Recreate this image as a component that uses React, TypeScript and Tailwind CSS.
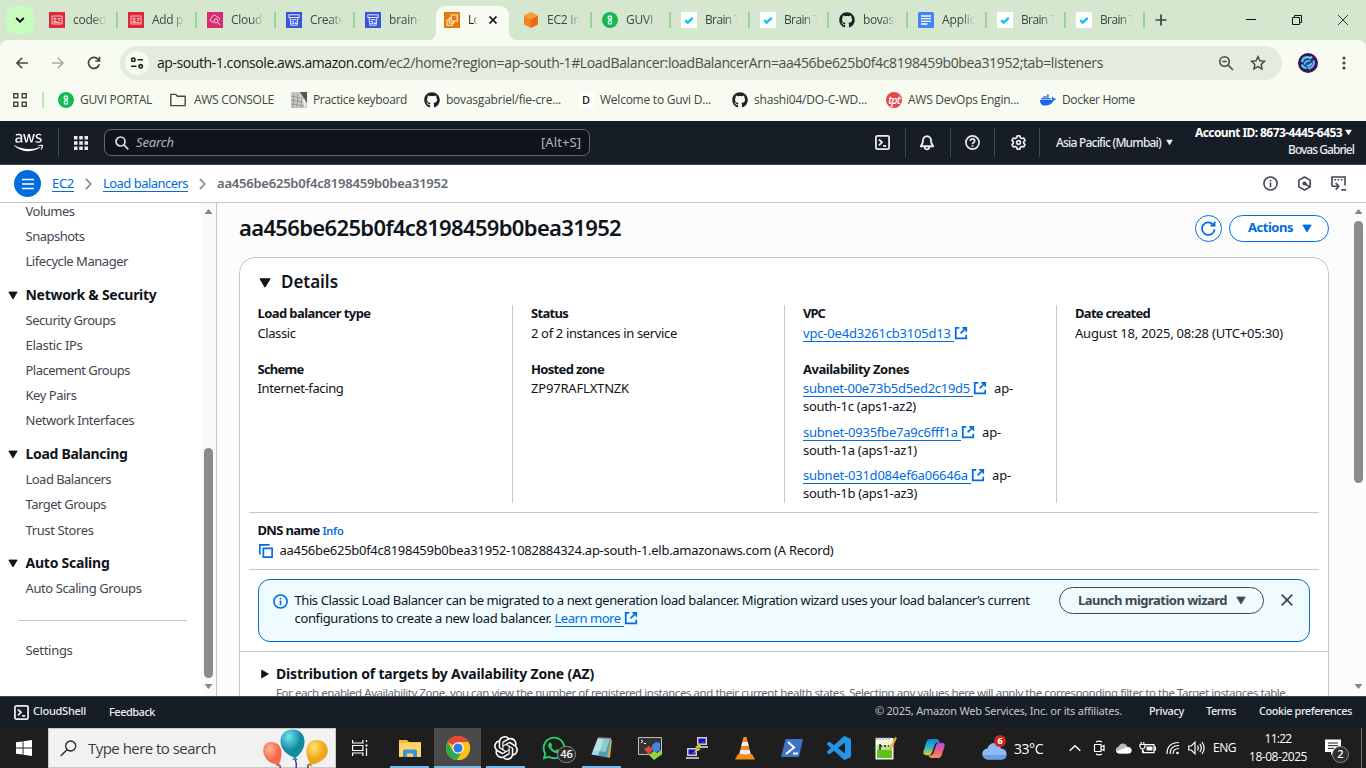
import { useLayoutEffect, useRef, useState } from "react";
import type { ReactNode } from "react";
import { FaAws, FaDocker, FaGithub, FaWhatsapp } from "react-icons/fa";
import { SiOpenai } from "react-icons/si";

/* Text run whose tracking is adjusted so that it fills an exact width. */
function Fit({ w, className = "", children }: { w: number; className?: string; children: string }) {
  const ref = useRef<HTMLSpanElement>(null);
  const [spacing, setSpacing] = useState(0);
  useLayoutEffect(() => {
    const el = ref.current;
    if (!el) return;
    el.style.letterSpacing = "0px";
    const natural = el.getBoundingClientRect().width;
    setSpacing((w - natural) / children.length);
  }, [w, children]);
  return (
    <span className={`inline-block shrink-0 align-top whitespace-pre ${className}`} style={{ width: w }}>
      <span ref={ref} style={{ letterSpacing: spacing }}>
        {children}
      </span>
    </span>
  );
}

const Down = ({ className = "" }: { className?: string }) => (
  <svg viewBox="0 0 12 10" className={`shrink-0 ${className}`} fill="currentColor">
    <path d="M1 .8h10L6 9.2z" stroke="currentColor" strokeWidth="1" strokeLinejoin="round" />
  </svg>
);

const External = ({ className = "" }: { className?: string }) => (
  <svg viewBox="0 0 16 16" className={`inline-block h-[14px] w-[14px] ${className}`} fill="none" stroke="currentColor" strokeWidth="2">
    <path d="M6 2H2v12h12v-4M9.500 2H14v4.500M14 2 7.500 8.500" />
  </svg>
);

/* ---------- Browser icons ---------- */

const RedCard = () => (
  <svg viewBox="0 0 16 16" className="size-4 shrink-0">
    <rect width="16" height="16" fill="#dc2a3a" />
    <path d="M3 4h10v8H3zM4.500 9.500h3M9 6.500h2.500M9 8h2.500M4.500 10.300h7" fill="none" stroke="#ffd9dc" strokeWidth=".9" />
    <circle cx="6" cy="7" r="1.100" fill="none" stroke="#ffd9dc" strokeWidth=".9" />
  </svg>
);
const PinkCloud = () => (
  <svg viewBox="0 0 16 16" className="size-4 shrink-0">
    <rect width="16" height="16" fill="#d92b72" />
    <path d="M6.500 10H5a2 2 0 0 1-.4-3.900C4.800 4 6.200 3.200 7.600 3.300c1.300.1 2 .8 2.400 1.900 1.600 0 2.700 1 2.700 2.400" fill="none" stroke="#ffe1ee" strokeWidth=".9" />
    <circle cx="9" cy="9" r="2" fill="none" stroke="#ffe1ee" strokeWidth=".9" />
    <path d="m10.500 10.500 2.500 2.300" stroke="#ffe1ee" />
  </svg>
);
const BlueBucket = () => (
  <svg viewBox="0 0 16 16" className="size-4 shrink-0">
    <rect width="16" height="16" fill="#3b55d9" />
    <path d="M2.800 2.800h10.400v2.700H2.800zM4 5.500l.8 7.700h6.400l.8-7.700M5.500 7.700h5M5.500 9.500h2v2h-2M8.500 11.500l2.300-2M9 11.500h2" fill="none" stroke="#dfe6ff" strokeWidth="1" />
  </svg>
);
const Ec2 = () => (
  <svg viewBox="0 0 16 16" className="size-4 shrink-0">
    <rect width="16" height="16" fill="#e57a0c" />
    <path d="M7.200 3h6v6h-6zM9.800 9v2H5.200V6h2M5.200 8H3v5.200h5.200V11" fill="none" stroke="#fff0d8" strokeWidth="1.100" strokeLinejoin="round" />
  </svg>
);
const Cube = () => (
  <svg viewBox="0 0 16 16" className="size-4 shrink-0">
    <path d="m8 0 7 3.400-7 3.800L1 3.400z" fill="#fb9a2d" />
    <path d="M1 3.400 8 7.200V16l-7-3.600z" fill="#f58220" />
    <path d="M15 3.400 8 7.200V16l7-3.600z" fill="#ec6816" />
  </svg>
);
const Guvi = () => (
  <svg viewBox="0 0 16 16" className="size-4 shrink-0">
    <circle cx="8" cy="8" r="8" fill="#16b955" />
    <g fill="none" stroke="#e9fff1" strokeWidth="1.300">
      <circle cx="7.800" cy="5.700" r="1.700" />
      <path d="M9.500 4.500v2.300c0 2-3.200 1.300-3.200 3.600a1.700 1.700 0 0 0 3.400 0c0-1-.8-1.600-1.500-1.900" />
    </g>
  </svg>
);
const Check = () => (
  <svg viewBox="0 0 16 16" className="size-4 shrink-0">
    <rect width="16" height="16" fill="#fff" />
    <path d="m4.200 8.200 2.500 2.400 5-4.800" fill="none" stroke="#10c0f5" strokeWidth="2.300" />
  </svg>
);
const Doc = () => (
  <svg viewBox="0 0 16 16" className="size-4 shrink-0">
    <rect width="16" height="16" rx="1.500" fill="#4285f4" />
    <path d="M3 4h10M3 6.700h10M3 9.400h10M3 12h6.500" stroke="#fff" strokeWidth="1.300" />
  </svg>
);
const Github = () => <FaGithub className="size-4 shrink-0 text-[#1f2328]" />;

function Tab({ icon, text, w, sep = true }: { icon: ReactNode; text: string; w: number; sep?: boolean }) {
  return (
    <div className="flex h-[30px] w-[79px] shrink-0 items-center pl-2">
      {icon}
      <div className="ml-2 w-[33px] overflow-hidden text-[#40483d] [mask-image:linear-gradient(to_right,black_60%,transparent)]">
        <Fit w={w}>{text}</Fit>
      </div>
      {sep && <div className="ml-[10px] h-4 w-[2px] bg-[#9ad69a]" />}
    </div>
  );
}

function TabStrip() {
  return (
    <div className="flex h-10 items-center bg-[#d5e7cf] text-[12px]">
      <div className="ml-[6px] flex size-7 items-center justify-center rounded-[9px] bg-[#c6fdbf]">
        <svg viewBox="0 0 10 8" className="h-2 w-[10px]" fill="none" stroke="#111" strokeWidth="1.900">
          <path d="m1.200 2 3.800 3.600L8.800 2" />
        </svg>
      </div>
      <div className="ml-[7px] flex items-center">
        <Tab icon={<RedCard />} text="coded" w={33} />
        <Tab icon={<RedCard />} text="Add po" w={38} />
        <Tab icon={<PinkCloud />} text="CloudW" w={42} />
        <Tab icon={<BlueBucket />} text="Create" w={35} />
        <Tab icon={<BlueBucket />} text="brain-t" w={36} sep={false} />
      </div>
      <div className="relative mt-[6px] flex h-[34px] w-[73px] items-center rounded-t-[9px] bg-[#f8fbf2] pb-[6px] pl-2">
        <div className="absolute bottom-0 -left-2 size-2 bg-[radial-gradient(circle_at_top_left,transparent_8px,#f8fbf2_8px)]" />
        <div className="absolute -right-2 bottom-0 size-2 bg-[radial-gradient(circle_at_top_right,transparent_8px,#f8fbf2_8px)]" />
        <Ec2 />
        <div className="ml-2 w-[10px] overflow-hidden text-[#1b1f1a] [mask-image:linear-gradient(to_right,black_50%,transparent)]">
          <Fit w={24}>Load</Fit>
        </div>
        <svg viewBox="0 0 8 8" className="ml-[11px] size-2" stroke="#1b1f1a" strokeWidth="1.700">
          <path d="m.5.5 7 7m0-7-7 7" />
        </svg>
      </div>
      <div className="ml-[6px] flex items-center">
        <Tab icon={<Cube />} text="EC2 Ins" w={39} />
        <Tab icon={<Guvi />} text="GUVI" w={27} />
        <Tab icon={<Check />} text="Brain Ta" w={41} />
        <Tab icon={<Check />} text="Brain Ta" w={41} />
        <Tab icon={<Github />} text="bovasg" w={37} />
        <Tab icon={<Doc />} text="Applica" w={40} />
        <Tab icon={<Check />} text="Brain Ta" w={41} />
        <Tab icon={<Check />} text="Brain Ta" w={41} />
      </div>
      <svg viewBox="0 0 12 12" className="ml-[8px] size-3" stroke="#3c443a" strokeWidth="1.700">
        <path d="M6 .5v11M.5 6h11" />
      </svg>
      <div className="mr-[18px] ml-auto flex items-center gap-[36px]">
        <svg viewBox="0 0 10 10" className="size-[10px]" stroke="#111">
          <path d="M0 4.500h10" />
        </svg>
        <svg viewBox="0 0 10 10" className="size-[10px]" fill="none" stroke="#111">
          <path d="M.5 2.500h7v7h-7zM2.500 2.500v-2h7v7h-2" />
        </svg>
        <svg viewBox="0 0 10 10" className="size-[10px]" stroke="#222" strokeWidth=".9">
          <path d="m0 0 10 10M10 0 0 10" />
        </svg>
      </div>
    </div>
  );
}

function Toolbar() {
  return (
    <div className="h-[40px] bg-[#d5e7cf]">
      <div className="flex h-[46px] items-center rounded-t-[8px] bg-[#f8fbf2] pl-4">
        <svg viewBox="0 0 12 12" className="size-3" fill="none" stroke="#43493f" strokeWidth="1.600">
          <path d="M12 6H1.200M6.200.8 1 6l5.200 5.200" />
        </svg>
        <svg viewBox="0 0 12 12" className="ml-6 size-3" fill="none" stroke="#a5aaa0" strokeWidth="1.500">
          <path d="M0 6h10.800M5.800.8 11 6l-5.200 5.200" />
        </svg>
        <svg viewBox="0 0 14 14" className="ml-[23px] size-[14px]" fill="none" stroke="#43493f" strokeWidth="1.700">
          <path d="M12.300 8.200A5.500 5.500 0 1 1 11 3.200l1.200 1.300M12.500.8v4.200H8.300" />
        </svg>
        <div className="ml-[19px] flex h-[34px] w-[1162px] items-center rounded-full bg-[#e4ece0] pl-[5px] text-[14px] text-[#4a5147]">
          <div className="flex size-6 items-center justify-center rounded-full bg-[#f8fbf2]">
            <svg viewBox="0 0 14 12" className="h-3 w-[14px]" fill="none" stroke="#222" strokeWidth="1.600">
              <circle cx="3.300" cy="2.700" r="1.700" />
              <circle cx="10.700" cy="9.300" r="1.700" />
              <path d="M7.500 2.700H13M1 9.300h5.500" />
            </svg>
          </div>
          <Fit w={227} className="ml-2 pb-[2px] text-[#161a14]">ap-south-1.console.aws.amazon.com</Fit>
          <Fit w={719} className="pb-[2px]">/ec2/home?region=ap-south-1#LoadBalancer:loadBalancerArn=aa456be625b0f4c8198459b0bea31952;tab=listeners</Fit>
          <svg viewBox="0 0 16 16" className="ml-[115px] size-4" fill="none" stroke="#454b42" strokeWidth="1.600">
            <circle cx="6.500" cy="6.500" r="4.700" />
            <path d="m10 10 5 5M4.300 6.500h4.400" />
          </svg>
          <svg viewBox="0 0 16 16" className="ml-4 size-4" fill="none" stroke="#454b42" strokeWidth="1.400">
            <path d="m8 1.600 1.900 4.200 4.600.5-3.400 3.100 1 4.500L8 11.600l-4.100 2.300 1-4.500L1.500 6.300l4.600-.5z" />
          </svg>
        </div>
        <svg viewBox="0 0 20 20" className="ml-4 size-5">
          <circle cx="10" cy="10" r="10" fill="#3c1459" />
          <circle cx="10" cy="10" r="6" fill="#23418f" />
          <path d="M4 9C4.500 4.500 9 3 12.500 5l1.500-1.500" fill="none" stroke="#48dcec" strokeWidth="2.200" />
          <path d="M15.500 7.500c1.500 4-1 7-4.500 7.500l1 1.500" fill="none" stroke="#5db4f2" strokeWidth="2.200" />
          <path d="M4 11.500c.5 2.500 2 3.500 4.500 3.500" fill="none" stroke="#48dcec" strokeWidth="2" />
          <path d="M6.500 11.500c.5-3 2.500-4 5.500-3.500M13.500 10c-.5 2-2 3-5 2.500" fill="none" stroke="#7fd2f7" strokeWidth="1.400" />
        </svg>
        <svg viewBox="0 0 4 14" className="ml-6 h-[14px] w-1" fill="#43493f">
          <circle cx="2" cy="2" r="1.600" />
          <circle cx="2" cy="7" r="1.600" />
          <circle cx="2" cy="12" r="1.600" />
        </svg>
      </div>
    </div>
  );
}

function Mark({ icon, text, w, gap, inner = "ml-[6px]" }: { icon: ReactNode; text: string; w: number; gap: string; inner?: string }) {
  return (
    <div className={`flex items-center ${gap}`}>
      {icon}
      <Fit w={w} className={inner}>{text}</Fit>
    </div>
  );
}

function Bookmarks() {
  return (
    <div className="flex h-[41px] items-center bg-[#f8fbf2] pb-px pl-[13px] text-[12px] text-[#40463d]">
      <svg viewBox="0 0 14 14" className="size-[14px]" fill="none" stroke="#43493f" strokeWidth="1.500">
        <path d="M.8.8h4v4h-4zM9.200.8h4v4h-4zM.8 9.200h4v4h-4zM9.200 9.200h4v4h-4z" />
      </svg>
      <div className="ml-[15px] h-4 w-[2px] bg-[#b4edac]" />
      <Mark gap="ml-[14px]" icon={<Guvi />} text="GUVI PORTAL" w={72} />
      <Mark
        gap="ml-[18px]"
        inner="ml-2"
        icon={
          <svg viewBox="0 0 16 14" className="h-[14px] w-4" fill="none" stroke="#43493f" strokeWidth="1.400" strokeLinejoin="round">
            <path d="M.8 12.600V1.400h5l1.600 1.800h7.800v9.400z" />
          </svg>
        }
        text="AWS CONSOLE"
        w={80}
      />
      <Mark
        gap="ml-[17px]"
        icon={
          <svg viewBox="0 0 16 16" className="size-4">
            <rect width="16" height="16" fill="#c9c9c9" />
            <path d="M9 0h7v11z" fill="#555" />
            <path d="M0 4l9 2M0 8l12 2M0 12l14 2M3 1l-1 15M7 1 6 16M11 5l-1 11" stroke="#8a8a8a" strokeWidth=".7" />
            <path d="M12.500 7l2 8" stroke="#eee" strokeWidth="2" />
          </svg>
        }
        text="Practice keyboard"
        w={94}
      />
      <Mark gap="ml-[17px]" icon={<Github />} text="bovasgabriel/fie-cre..." w={115} />
      <Mark
        gap="ml-[17px]"
        icon={<span className="flex size-4 items-center justify-center rounded-[2px] bg-white text-[11px] font-semibold text-[#222]">D</span>}
        text="Welcome to Guvi D..."
        w={111}
      />
      <Mark gap="ml-[21px]" icon={<Github />} text="shashi04/DO-C-WD..." w={113} />
      <Mark
        gap="ml-[19px]"
        icon={
          <span className="flex size-4 items-center justify-center rounded-full bg-[#ea4648] pb-[2px] text-[11px] leading-none font-semibold tracking-[-1px] text-white italic">
            tpt
          </span>
        }
        text="AWS DevOps Engin..."
        w={111}
      />
      <Mark gap="ml-[21px]" icon={<FaDocker className="size-4 text-[#1d63ed]" />} text="Docker Home" w={73} />
    </div>
  );
}

/* ---------- AWS console ---------- */

const ShellIcon = () => (
  <svg viewBox="0 0 16 16" className="size-[15px] shrink-0" fill="none" stroke="currentColor" strokeWidth="1.900">
    <rect x="1" y="1" width="14" height="14" rx="1.500" />
    <path d="m4.200 4.800 3.300 3-3.300 3.200M8.500 11.500h3.500" />
  </svg>
);
const Rule = ({ className = "" }: { className?: string }) => <div className={`h-[29px] w-px bg-[#424650] ${className}`} />;

function AwsHeader() {
  return (
    <div className="flex h-[44px] items-center border-b border-[#424650] bg-[#161d26] pl-[14px] text-[12px] text-[#ebebf0]">
      <FaAws className="h-[29px] w-[29px] text-white" />
      <Rule className="ml-[15px]" />
      <svg viewBox="0 0 14 14" className="ml-[15px] size-[14px]" fill="currentColor">
        <path d="M0 0h3.500v3.500H0zM5.250 0h3.500v3.500h-3.500zM10.500 0H14v3.500h-3.500zM0 5.250h3.500v3.500H0zM5.250 5.250h3.500v3.500h-3.500zM10.500 5.250H14v3.500h-3.500zM0 10.500h3.500V14H0zM5.250 10.500h3.500V14h-3.500zM10.500 10.500H14V14h-3.500z" />
      </svg>
      <div className="ml-4 flex h-[27px] w-[486px] items-center rounded-[7px] border border-[#656871] bg-[#0f141a] pl-[10px] text-[13px] text-[#b4b4bb]">
        <svg viewBox="0 0 14 14" className="size-[14px]" fill="none" stroke="#dedee3" strokeWidth="1.700">
          <circle cx="5.500" cy="5.500" r="4.500" />
          <path d="m9 9 4.300 4.300" />
        </svg>
        <Fit w={38} className="ml-[7px] italic">Search</Fit>
        <Fit w={40} className="mr-[8px] ml-auto">[Alt+S]</Fit>
      </div>
      <div className="ml-[285px] flex items-center">
        <ShellIcon />
        <Rule className="ml-[15px]" />
        <svg viewBox="0 0 16 16" className="ml-[13px] size-4" fill="none" stroke="currentColor" strokeWidth="1.900">
          <path d="M8 1.200c2.700 0 4 2 4 4.300 0 3 .8 4.200 2.200 5.700H1.800C3.200 9.700 4 8.500 4 5.500c0-2.300 1.300-4.300 4-4.300z" strokeLinejoin="round" />
          <path d="M5.700 12c.3 3.200 4.300 3.200 4.600 0" />
        </svg>
        <Rule className="ml-[15px]" />
        <svg viewBox="0 0 16 16" className="ml-[14px] size-[15px]" fill="none" stroke="currentColor" strokeWidth="1.800">
          <circle cx="8" cy="8" r="7" />
          <path d="M5.700 6.500C5.700 3.400 10.300 3.600 10.300 6.300 10.300 8 8 8 8 9.800M8 10.800v1.700" />
        </svg>
        <Rule className="ml-[14px]" />
        <svg viewBox="0 0 16 16" className="ml-[16px] size-[15px]" fill="none" stroke="currentColor" strokeWidth="1.800" strokeLinejoin="round">
          <path d="m6.500 1-.5 2-1.500.8-2-.6L1 5.800l1.500 1.500v1.400L1 10.200l1.500 2.600 2-.6 1.500.8.5 2h3l.5-2 1.500-.8 2 .6 1.500-2.600-1.500-1.500V7.300L15 5.800l-1.500-2.600-2 .6L10 3l-.5-2z" />
          <circle cx="8" cy="8" r="2" />
        </svg>
        <Rule className="ml-[13px]" />
      </div>
      <Fit w={105} className="ml-4 font-medium">Asia Pacific (Mumbai)</Fit>
      <Down className="ml-[5px] h-[7px] w-[7px]" />
      <div className="ml-[22px] flex flex-col items-end pb-[3px] leading-[17px]">
        <div className="mr-[2px] flex items-center gap-[3px] font-bold text-white">
          <Fit w={147}>Account ID: 8673-4445-6453</Fit>
          <Down className="h-[7px] w-[7px]" />
        </div>
        <Fit w={66} className="font-medium">Bovas Gabriel</Fit>
      </div>
    </div>
  );
}

const Chevron = ({ className = "" }: { className?: string }) => (
  <svg viewBox="0 0 7 12" className={`h-3 w-[7px] ${className}`} fill="none" stroke="#8c8c94" strokeWidth="1.700">
    <path d="m.8.8 5 5.200-5 5.200" />
  </svg>
);

function Breadcrumbs() {
  return (
    <div className="flex h-[38px] items-center border-b border-[#c6c6cd] bg-white pl-[14px] text-[13px]">
      <div className="flex size-[27px] items-center justify-center rounded-full bg-[#006ce0]">
        <svg viewBox="0 0 12 12" className="size-3" stroke="#fff" strokeWidth="1.700">
          <path d="M0 1.500h12M0 6h12M0 10.500h12" />
        </svg>
      </div>
      <Fit w={22} className="ml-[11px] border-b border-[#006ce0] leading-[15px] text-[#006ce0]">EC2</Fit>
      <Chevron className="ml-[11px]" />
      <Fit w={85} className="ml-[11px] border-b border-[#006ce0] leading-[15px] text-[#006ce0]">Load balancers</Fit>
      <Chevron className="ml-[11px]" />
      <Fit w={231} className="ml-[11px] font-semibold text-[#656871]">aa456be625b0f4c8198459b0bea31952</Fit>
      <div className="mr-[20px] ml-auto flex items-center gap-[19px] text-[#424650]">
        <svg viewBox="0 0 16 16" className="size-[15px]" fill="none" stroke="currentColor" strokeWidth="1.700">
          <circle cx="8" cy="8" r="7" />
          <path d="M8 7v5M8 4v1.800" />
        </svg>
        <svg viewBox="0 0 16 16" className="size-[15px]" fill="none" stroke="currentColor" strokeWidth="1.700" strokeLinejoin="round">
          <path d="m8 1 6 3.400v7.200L8 15l-6-3.400V4.400z" />
          <circle cx="8" cy="8" r="2.200" fill="currentColor" stroke="none" />
          <path d="m8.500 8.500 5 2.800" />
        </svg>
        <svg viewBox="0 0 16 16" className="size-[15px]" fill="none" stroke="currentColor" strokeWidth="1.700">
          <path d="M1 11V1h14v9M3.500 4h1.800M7 4h1.800M10.500 4h1.800M1 11h6M5 7.500 8.300 11 5 14.500M11 14.800h5" />
        </svg>
      </div>
    </div>
  );
}

function Scrollbar({ track, thumb }: { track: string; thumb: string }) {
  return (
    <div className={`flex w-[15px] shrink-0 flex-col items-center pt-[6px] ${track}`}>
      <svg viewBox="0 0 8 5" className="h-[5px] w-[9px] shrink-0" fill="#858585">
        <path d="M4 0l4 5H0z" />
      </svg>
      <div className={`w-[9px] shrink-0 rounded-full bg-[#8b8b8b] ${thumb}`} />
      <svg viewBox="0 0 8 5" className="mt-auto mb-[7px] h-[5px] w-[9px] shrink-0" fill="#858585">
        <path d="M4 5l4-5H0z" />
      </svg>
    </div>
  );
}

const NavItem = ({ w, children }: { w: number; children: string }) => (
  <div className="flex h-[25px] items-center pl-[25.500px]">
    <Fit w={w}>{children}</Fit>
  </div>
);
const NavHead = ({ w, gap = "mt-[9px]", children }: { w: number; gap?: string; children: string }) => (
  <div className={`flex h-[25px] items-center pb-px pl-[8px] text-[14px] font-bold text-[#0f141a] ${gap}`}>
    <Down className="h-[9px] w-[10px]" />
    <Fit w={w} className="ml-[7.500px] pb-px">{children}</Fit>
  </div>
);

function SideNav() {
  return (
    <div className="flex w-[217px] shrink-0 overflow-hidden border-r border-[#c6c6cd] bg-white text-[13px] text-[#424650]">
      <div className="-mt-1 w-[201px]">
        <NavItem w={49}>Volumes</NavItem>
        <NavItem w={59}>Snapshots</NavItem>
        <NavItem w={102.5}>Lifecycle Manager</NavItem>
        <NavHead w={131}>Network &amp; Security</NavHead>
        <NavItem w={90}>Security Groups</NavItem>
        <NavItem w={57}>Elastic IPs</NavItem>
        <NavItem w={104.5}>Placement Groups</NavItem>
        <NavItem w={51}>Key Pairs</NavItem>
        <NavItem w={108.5}>Network Interfaces</NavItem>
        <NavHead w={102}>Load Balancing</NavHead>
        <NavItem w={85.5}>Load Balancers</NavItem>
        <NavItem w={80.5}>Target Groups</NavItem>
        <div className="pt-px">
          <NavItem w={68}>Trust Stores</NavItem>
        </div>
        <NavHead w={84} gap="mt-[8px]">Auto Scaling</NavHead>
        <NavItem w={116}>Auto Scaling Groups</NavItem>
        <div className="mt-[19px] mb-[17px] ml-[18px] h-px w-[169px] bg-[#c6c6cd]" />
        <NavItem w={47}>Settings</NavItem>
      </div>
      <Scrollbar track="bg-[#fafafa]" thumb="mt-[234px] h-[230px]" />
    </div>
  );
}

/* Label above a value; the cell height fixes where the next label starts. */
function Field({ label, lw, children, tight = "h-[20px]" }: { label: string; lw: number; children: ReactNode; tight?: string }) {
  return (
    <div>
      <div className={`leading-[17px] ${tight}`}>
        <Fit w={lw} className="font-bold">{label}</Fit>
      </div>
      <div className="h-[18px] leading-[17px]">{children}</div>
    </div>
  );
}

const LinkOut = ({ w, children }: { w: number; children: string }) => (
  <span className="flex items-center text-[#006ce0]">
    <Fit w={w} className="-mb-[1px] h-[17px] border-b border-[#006ce0] leading-[17px]">{children}</Fit>
    <External />
  </span>
);

function Subnet({ id, w, zone, zw }: { id: string; w: number; zone: string; zw: number }) {
  return (
    <div className="leading-[18px]">
      <div className="flex h-[18px] items-center">
        <LinkOut w={w}>{id}</LinkOut>
        <Fit w={19} className="ml-[7px]">ap-</Fit>
      </div>
      <div className="h-[18px]">
        <Fit w={zw}>{zone}</Fit>
      </div>
    </div>
  );
}

function Details() {
  return (
    <div className="mr-[9px] ml-[9px]">
      <div className="flex h-[198px]">
        <div className="flex w-[264px] flex-col gap-[18px] border-r border-[#c6c6cd] pl-[8.500px]">
          <Field label="Load balancer type" lw={113}><Fit w={38}>Classic</Fit></Field>
          <Field label="Scheme" lw={46} tight="h-[19px]"><Fit w={86}>Internet-facing</Fit></Field>
        </div>
        <div className="flex w-[272px] flex-col gap-[18px] border-r border-[#c6c6cd] pl-[18px]">
          <Field label="Status" lw={37}><Fit w={146}>2 of 2 instances in service</Fit></Field>
          <Field label="Hosted zone" lw={73} tight="h-[19px]"><Fit w={98}>ZP97RAFLXTNZK</Fit></Field>
        </div>
        <div className="flex w-[272px] flex-col gap-[18px] border-r border-[#c6c6cd] pl-[18px]">
          <Field label="VPC" lw={22}><LinkOut w={151}>vpc-0e4d3261cb3105d13 </LinkOut></Field>
          <Field label="Availability Zones" lw={106} tight="h-[18px]">
            <div className="flex flex-col gap-[7.500px]">
              <Subnet id="subnet-00e73b5d5ed2c19d5 " w={170} zone="south-1c (aps1-az2)" zw={113} />
              <Subnet id="subnet-0935fbe7a9c6fff1a " w={158} zone="south-1a (aps1-az1)" zw={114} />
              <Subnet id="subnet-031d084ef6a06646a " w={168} zone="south-1b (aps1-az3)" zw={114} />
            </div>
          </Field>
        </div>
        <div className="pl-[18px]">
          <Field label="Date created" lw={75}><Fit w={208}>August 18, 2025, 08:28 (UTC+05:30)</Fit></Field>
        </div>
      </div>
      <div className="mt-[9px] h-[57px] border-t border-[#c6c6cd] pt-[8px] pl-[8.500px]">
        <div className="flex h-[20px] items-center">
          <Fit w={62} className="font-bold">DNS name</Fit>
          <Fit w={21} className="ml-[3px] text-[11px] font-semibold text-[#006ce0]">Info</Fit>
        </div>
        <div className="flex h-[19px] items-center">
          <svg viewBox="0 0 16 16" className="ml-[1px] size-[14px]" fill="none" stroke="#006ce0" strokeWidth="1.900">
            <path d="M5 5h10v10H5zM1 12V1h11" />
          </svg>
          <Fit w={554} className="ml-[7px]">aa456be625b0f4c8198459b0bea31952-1082884324.ap-south-1.elb.amazonaws.com (A Record)</Fit>
        </div>
      </div>
      <div className="h-px bg-[#c6c6cd]" />
      <div className="mx-[9px] mt-[9px] flex h-[63px] rounded-[12px] border border-[#006ce0] bg-[#f0fbff] leading-[18px]">
        <svg viewBox="0 0 16 16" className="mt-[14px] ml-[14px] size-[15px] shrink-0" fill="none" stroke="#006ce0" strokeWidth="1.700">
          <circle cx="8" cy="8" r="7" />
          <path d="M8 7v5M8 4v1.800" />
        </svg>
        <div className="mt-[11px] ml-[6.500px] w-[764.500px]">
          <div className="h-[18px]">
            <Fit w={735}>This Classic Load Balancer can be migrated to a next generation load balancer. Migration wizard uses your load balancer’s current</Fit>
          </div>
          <div className="flex h-[18px] items-center gap-[3px]">
            <Fit w={257}>configurations to create a new load balancer.</Fit>
            <LinkOut w={69}>Learn more </LinkOut>
          </div>
        </div>
        <div className="mt-[7px] flex h-[27px] w-[205px] shrink-0 items-center rounded-full border border-[#424650] pl-[18px] font-bold text-[#424650]">
          <Fit w={149} className="pb-[2px]">Launch migration wizard</Fit>
          <Down className="ml-[9px] h-[9px] w-[10px]" />
        </div>
        <svg viewBox="0 0 12 12" className="mt-[14px] ml-[17px] size-3" stroke="#424650" strokeWidth="1.700">
          <path d="m.7.700 10.600 10.600M11.300.7.700 11.300" />
        </svg>
      </div>
    </div>
  );
}

function Main() {
  return (
    <div className="flex min-w-0 flex-1 overflow-hidden bg-[#fcfcfd] text-[13px] text-[#0f141a]">
      <div className="w-[1134px] pt-[12px] pl-[22px]">
        <div className="flex h-[27px] w-[1090px] items-center">
          <Fit w={382} className="pb-[2px] text-[22px] leading-[27px] font-semibold">aa456be625b0f4c8198459b0bea31952</Fit>
          <div className="ml-auto flex size-[27px] items-center justify-center rounded-full border-[1.500px] border-[#006ce0] bg-white">
            <svg viewBox="0 0 16 16" className="size-[15px]" fill="none" stroke="#006ce0" strokeWidth="1.900">
              <path d="M14.500 9A6.700 6.700 0 1 1 12.500 3.300L14 4.700M14.500.5V5H10" />
            </svg>
          </div>
          <div className="ml-[7px] flex h-[27px] w-[100px] items-center rounded-full border-[1.500px] border-[#006ce0] bg-white pb-px pl-[18px] font-bold text-[#006ce0]">
            <Fit w={45}>Actions</Fit>
            <Down className="ml-[9px] h-[9px] w-[10px]" />
          </div>
        </div>
        <div className="mt-[15px] h-[460px] w-[1090px] rounded-t-[16px] border border-[#c6c6cd] bg-white">
          <div className="flex h-[47px] items-center pl-[19px]">
            <Down className="mt-[3px] h-[10px] w-[12px]" />
            <Fit w={57} className="ml-[10px] text-[17px] font-semibold">Details</Fit>
          </div>
          <Details />
          <div className="mt-[9px] border-t border-[#c6c6cd] pt-[10px] pl-[20px]">
            <div className="flex h-[23px] items-center">
              <Down className="h-[8px] w-[10px] -rotate-90" />
              <Fit w={318} className="ml-[6px] text-[14px] font-bold">Distribution of targets by Availability Zone (AZ)</Fit>
            </div>
            <Fit w={1012} className="ml-[16px] pt-px text-[11.500px] leading-[14px] text-[#656871]">For each enabled Availability Zone, you can view the number of registered instances and their current health states. Selecting any values here will apply the corresponding filter to the Target instances table.</Fit>
          </div>
        </div>
      </div>
      <Scrollbar track="bg-[#fcfcfc]" thumb="mt-[7px] h-[262px]" />
    </div>
  );
}

function Footer() {
  return (
    <div className="flex h-[32px] items-center border-t border-[#424650] bg-[#161d26] pl-[14px] text-[11px] font-medium text-[#ebebf0]">
      <ShellIcon />
      <Fit w={53} className="ml-[4px] pb-[2px]">CloudShell</Fit>
      <Fit w={46} className="ml-[23px]">Feedback</Fit>
      <div className="mr-[14px] ml-auto flex pb-[2px]">
        <Fit w={247} className="font-normal text-[#c6c6cd]">© 2025, Amazon Web Services, Inc. or its affiliates.</Fit>
        <Fit w={35} className="ml-[27px]">Privacy</Fit>
        <Fit w={30} className="ml-[22px]">Terms</Fit>
        <Fit w={93} className="ml-[23px]">Cookie preferences</Fit>
      </div>
    </div>
  );
}

/* ---------- Taskbar ---------- */

const Balloons = () => (
  <svg viewBox="0 0 70 39" className="h-[39px] w-[70px]">
    <defs>
      <radialGradient id="br" cx=".35" cy=".3"><stop offset="0" stopColor="#ffb39a" /><stop offset="1" stopColor="#f4694c" /></radialGradient>
      <radialGradient id="bt" cx=".35" cy=".25"><stop offset="0" stopColor="#6fe6ee" /><stop offset="1" stopColor="#13899f" /></radialGradient>
      <radialGradient id="by" cx=".35" cy=".3"><stop offset="0" stopColor="#ffe469" /><stop offset="1" stopColor="#f0a41c" /></radialGradient>
    </defs>
    <path d="M18 35q3 2 2 4M35 30q2 5 1 9M50 35q-3 1-2 4" fill="none" stroke="#4a2a86" strokeWidth="1.400" />
    <path d="M11 13c7 0 11 5 10.500 12-.4 6-2 9-3.500 11-5-1-9.500-3-12-6.500C1 22 3 13 11 13z" fill="url(#br)" />
    <path d="M57 11c7 0 12 6 10.500 13C66 30 58 35 51 35.500 47 30 46 25 46.500 20 47.300 14 51 11 57 11z" fill="url(#by)" />
    <path d="M32.500.5c8 0 12.500 6 12 13-.5 8-5.500 13-9.500 15.500C27 26 20.500 20 20.500 12.500 20.500 5 25.500.5 32.500.5z" fill="url(#bt)" />
    <path d="m32 31 3-3 3 3z" fill="#1c92a8" />
    <path d="m16 37 2-3 3 3z" fill="#e8593c" />
    <path d="m48 36.500 3-3 1 4z" fill="#e39a18" />
  </svg>
);

function TaskButton({ children, bar = "", className = "" }: { children: ReactNode; bar?: string; className?: string }) {
  return (
    <div className={`relative flex h-10 w-[47px] shrink-0 items-center justify-center ${className}`}>
      {children}
      {bar && <div className={`absolute bottom-0 h-[2px] ${bar}`} />}
    </div>
  );
}

function Taskbar() {
  return (
    <div className="flex h-10 items-center bg-[#1e1e1e] text-white">
      <svg viewBox="0 0 16 16" className="ml-4 size-4" fill="#fff">
        <path d="M0 2.300 6.600 1.400v6.200H0zM7.500 1.200 16 0v7.600H7.500zM0 8.400h6.600v6.200L0 13.700zM7.500 8.400H16V16l-8.500-1.200z" />
      </svg>
      <div className="ml-4 flex h-10 w-[288px] items-center border border-[#c8c8c8] bg-[#f1f1f1] pl-[11px] text-[15px] text-[#3d3d3d]">
        <svg viewBox="0 0 17 17" className="size-[17px]" fill="none" stroke="#222" strokeWidth="1.300">
          <circle cx="10.700" cy="6" r="5" />
          <path d="M7 9.700.7 16" />
        </svg>
        <Fit w={128} className="ml-[11px]">Type here to search</Fit>
        <div className="ml-[44px]"><Balloons /></div>
      </div>
      <svg viewBox="0 0 16 16" className="ml-4 size-4" fill="none" stroke="#fff" strokeWidth="1.200">
        <path d="M.6 0v3h10.300V0M.6 5.500h10.300v5H.6zM.6 16v-3h10.300v3M14.500 0v2M14.500 8v8" />
        <path d="M13.500 4.500h2v2h-2z" fill="#fff" stroke="none" />
      </svg>
      <div className="ml-[18px] flex">
        <TaskButton bar="w-[39px] bg-[#76b9ed]">
          <svg viewBox="0 0 22 18" className="h-[18px] w-[22px]">
            <path d="M0 1h8l2 2h12v15H0z" fill="#f5b933" />
            <path d="M0 4h22v13.500H0z" fill="#fcd667" />
            <path d="M4 18v-5.500q0-2 2-2h10q2 0 2 2V18h-4v-3.500H8V18z" fill="#3b93dc" />
          </svg>
        </TaskButton>
        <TaskButton bar="w-[47px] bg-[#76b9ed]" className="ml-[1px] bg-[#4a4a4a]">
          <svg viewBox="0 0 24 24" className="size-6">
            <circle cx="12" cy="12" r="12" fill="#fbc116" />
            <path d="M12 12 1.600 6A12 12 0 0 1 22.400 6z" fill="#ea4335" />
            <path d="M1.600 6A12 12 0 0 0 11 24l5.500-9.300L7 14.500z" fill="#2fa84f" />
            <path d="M12 6h10.400A12 12 0 0 1 11 24l6-9z" fill="#fbc116" />
            <circle cx="12" cy="12" r="5.800" fill="#fff" />
            <circle cx="12" cy="12" r="4.600" fill="#3379e6" />
          </svg>
        </TaskButton>
        <TaskButton bar="w-[39px] bg-[#76b9ed]" className="ml-[1px]"><SiOpenai className="size-6" /></TaskButton>
        <TaskButton className="ml-[1px]">
          <FaWhatsapp className="size-[26px] text-[#25d366]" />
          <span className="absolute top-[18px] left-[27px] flex h-[17px] w-[19px] items-center justify-center rounded-full border border-[#8a8a8a] bg-[#2b2b2b] text-[11px] font-semibold">46</span>
        </TaskButton>
        <TaskButton bar="w-[39px] bg-[#76b9ed]" className="ml-[1px]">
          <svg viewBox="0 0 24 24" className="size-6">
            <path d="m20 3 2 1-2 18-4-1z" fill="#c9a85f" />
            <path d="m8 2 13 1-4 18.500L1.500 18.500z" fill="#4f9fae" />
            <path d="m8 2 12 1-4.500 13L3 14.500z" fill="#8fc9d1" />
            <path d="M8 2h6L8 19.500l-6.500-1z" fill="#c9eef0" opacity=".7" />
            <path d="m8 2 13 .8" stroke="#999" strokeWidth="1.500" />
          </svg>
        </TaskButton>
        <TaskButton className="ml-[1px]">
          <svg viewBox="0 0 24 24" className="size-6">
            <path d="M.5 1.500h23v17H.5z" fill="#333" stroke="#bdbdbd" />
            <path d="m3 4 2 1.500L3 7M6 7.500h2" stroke="#fff" fill="none" />
            <path d="m6 13 5-3 4 3-4 6z" fill="#e8443e" />
            <path d="m14 9 4-3 4 1v7l-5 3-3-4z" fill="#4483e8" />
            <path d="m11 19 5-4 3 2 4-3v5l-7 5z" fill="#8bd53d" />
          </svg>
        </TaskButton>
        <TaskButton>
          <svg viewBox="0 0 24 24" className="size-6">
            <path d="M12 1h10v8H12zM2 12h10v8H2z" fill="#cfcfcf" />
            <path d="M13.500 2.500h7v5h-7zM3.500 13.500h7v5h-7z" fill="#1515c8" />
            <path d="M11 10h12v2H11zM1 21h13v2H1z" fill="#b5b5b5" />
            <path d="m19 6-9 5 3 1-6 6 9-5-3-1z" fill="#ffee25" stroke="#555" strokeWidth=".4" />
          </svg>
        </TaskButton>
        <TaskButton className="ml-[1px]">
          <svg viewBox="0 0 20 24" className="h-6 w-5">
            <path d="M3 18h14l3 5.500H0z" fill="#f58a16" />
            <path d="M8.500 1h3L16 19q-6 2.500-12 0z" fill="#f3892c" />
            <path d="m7.300 6 5.400 0 1 4H6.300zM5.300 14h9.400l.8 3.500q-5.500 2-11 0z" fill="#eee" />
          </svg>
        </TaskButton>
        <TaskButton>
          <svg viewBox="0 0 24 20" className="h-5 w-6">
            <path d="M5.500 1H23l-4 18H1z" fill="#3b73c5" />
            <path d="m8 4 6 5.500L6 16M13 15.500h5" fill="none" stroke="#fff" strokeWidth="2" />
          </svg>
        </TaskButton>
        <TaskButton>
          <svg viewBox="0 0 24 24" className="size-6" fill="#2596e3">
            <path d="M23.150 2.587 18.210.21a1.494 1.494 0 0 0-1.705.29l-9.460 8.630-4.120-3.128a.999.999 0 0 0-1.276.057L.327 7.261A1 1 0 0 0 .326 8.740L3.899 12 .326 15.260a1 1 0 0 0 .001 1.479L1.650 17.940a.999.999 0 0 0 1.276.057l4.120-3.128 9.460 8.630a1.492 1.492 0 0 0 1.704.29l4.942-2.377A1.500 1.500 0 0 0 24 20.060V3.939a1.500 1.500 0 0 0-.85-1.352zm-5.146 14.861L10.826 12l7.178-5.448v10.896z" />
          </svg>
        </TaskButton>
        <TaskButton>
          <svg viewBox="0 0 22 24" className="h-6 w-[22px]">
            <path d="M.5 2h18v21.500H.5z" fill="#f7f7ee" />
            <path d="M2 14h15v8H2z" fill="#5fc21c" />
            <path d="M2 9h15v5H2z" fill="#b9e08a" />
            <path d="M2 5h15v4H2z" fill="#eef6de" />
            <path d="M5 14V8M5 10h2M9 10h2M13 10h1" stroke="#222" strokeWidth="1.400" />
            <path d="M2 1v3M5 1v3M8 1v3M11 1v3M14 1v3" stroke="#888" />
            <path d="m20 1 2 1-6 12-2 1 .3-2.500z" fill="#f0a838" />
          </svg>
        </TaskButton>
        <TaskButton className="ml-[1px]">
          <svg viewBox="0 0 24 22" className="h-[21px] w-6">
            <defs>
              <linearGradient id="c1" x2="0" y2="1"><stop offset="0" stopColor="#1978e5" /><stop offset=".5" stopColor="#25b8c4" /><stop offset="1" stopColor="#ecc82f" /></linearGradient>
              <linearGradient id="c2" x2="0" y2="1"><stop offset="0" stopColor="#a653e9" /><stop offset=".5" stopColor="#ee5a8c" /><stop offset="1" stopColor="#f8934f" /></linearGradient>
            </defs>
            <path d="M7 1h8q2 0 3 4h-3q-2 0-3 4l-2 6q-1 3-4 3H4q-4 0-3-4L4 4q1-3 3-3z" fill="url(#c1)" />
            <path d="M17 21H9q-2 0-3-3h3q2 0 3-4l2-6q1-3 4-3h2q4 0 3 4l-3 9q-1 3-3 3z" fill="url(#c2)" />
          </svg>
        </TaskButton>
      </div>
      <div className="relative ml-[25px] h-6 w-[26px]">
        <svg viewBox="0 0 26 24" className="h-6 w-[26px]">
          <path d="M6 23.500a5.500 5.500 0 0 1-.5-11Q7 7 12.500 7q5 0 6.500 5.500 5.500.5 5.500 5.500t-5 5.500z" fill="#8fb9f5" />
          <path d="M1 19q1 4.500 5 4.500h13.500q4.500 0 5-4.500z" fill="#6d9ce9" />
        </svg>
        <span className="absolute top-[-1px] left-[12px] flex size-3 items-center justify-center rounded-full bg-[#c42b1c] text-[9px] font-bold">6</span>
      </div>
      <Fit w={29} className="ml-[6px] text-[14px]">33°C</Fit>
      <svg viewBox="0 0 12 8" className="ml-[26px] h-2 w-3" fill="none" stroke="#fff" strokeWidth="1.400"><path d="m.7 6.800 5.300-5 5.300 5" /></svg>
      <svg viewBox="0 0 12 16" className="ml-[12px] h-4 w-3" fill="none" stroke="#fff" strokeWidth="1.200">
        <path d="M1.500 4.500h6.500v7H1.500zM8 7l3-1.500v5L8 9M3 2q3-1.800 6 0M3 14q3 1.800 6 0" />
      </svg>
      <svg viewBox="0 0 17 11" className="ml-[10px] h-[11px] w-[17px]">
        <path d="M4 10.500a3.400 3.400 0 0 1-.5-6.700Q5 .5 8 .5q3.300 0 4.500 3.500 4 .3 4 3.500 0 3-3.500 3z" fill="#b9b9b9" />
        <path d="M4 10.500q-2-.2-3-2L12.500 4q4 .3 4 3.500 0 3-3.500 3z" fill="#fff" />
      </svg>
      <svg viewBox="0 0 17 12" className="ml-[7px] h-3 w-[17px]" fill="none" stroke="#fff" strokeWidth="1.200">
        <path d="M6 2.600h9v8H4.500V8.500M15 5h1.500v3H15M1 2.500h5v2Q5.500 7 3.500 7 1.500 7 1 4.500zM2.200 2.500V0M4.800 2.500V0M3.500 7v4" />
        <path d="M7.500 4.500h6v4h-6z" fill="#fff" stroke="none" />
      </svg>
      <svg viewBox="0 0 14 14" className="ml-[10px] size-[14px]" fill="none" stroke="#fff" strokeWidth="1.200">
        <path d="M1 13Q1 1.500 13 1.500M4 13q0-8.500 9-8.500M7 13q0-5.500 6-5.500" />
        <circle cx="11.500" cy="12" r="1.300" fill="#fff" stroke="none" />
      </svg>
      <svg viewBox="0 0 17 14" className="ml-[8px] h-[14px] w-[17px]" fill="none" stroke="#fff" strokeWidth="1.200">
        <path d="M.7 5h2.600L7 1.200v11.600L3.300 9H.7zM9.500 4.500q1.500 2.500 0 5M11.800 2.800q3 4.200 0 8.400M14 1q4.200 6 0 12" />
      </svg>
      <Fit w={23} className="ml-[8px] text-[12px]">ENG</Fit>
      <div className="ml-[13px] flex w-[58px] flex-col items-center text-[12px] leading-[18px]">
        <Fit w={27}>11:22</Fit>
        <Fit w={58}>18-08-2025</Fit>
      </div>
      <div className="relative ml-[18px] h-6 w-[26px]">
        <svg viewBox="0 0 16 16" className="mt-[3px] size-4">
          <path d="M0 .5h16V13H9l-3 3v-3H0z" fill="#fff" />
          <path d="M3 4h10M3 6.700h10M3 9.400h6" stroke="#1e1e1e" />
        </svg>
        <span className="absolute top-[10px] left-[7px] flex size-[17px] items-center justify-center rounded-full border border-[#8a8a8a] bg-[#2f2f2f] text-[11px] font-semibold">2</span>
      </div>
      <div className="ml-[10px] h-10 w-px bg-[#6e6e6e]" />
    </div>
  );
}

export default function App() {
  return (
    <div className="flex h-[768px] w-[1366px] flex-col overflow-hidden font-['Noto_Sans','Open_Sans',sans-serif]">
      <div className="shrink-0 font-['Open_Sans','Noto_Sans',sans-serif]">
        <TabStrip />
        <Toolbar />
        <Bookmarks />
      </div>
      <div className="shrink-0">
        <AwsHeader />
        <Breadcrumbs />
      </div>
      <div className="flex h-[493px] shrink-0 overflow-hidden">
        <SideNav />
        <Main />
      </div>
      <Footer />
      <div className="shrink-0 font-['Open_Sans','Noto_Sans',sans-serif]">
        <Taskbar />
      </div>
    </div>
  );
}
